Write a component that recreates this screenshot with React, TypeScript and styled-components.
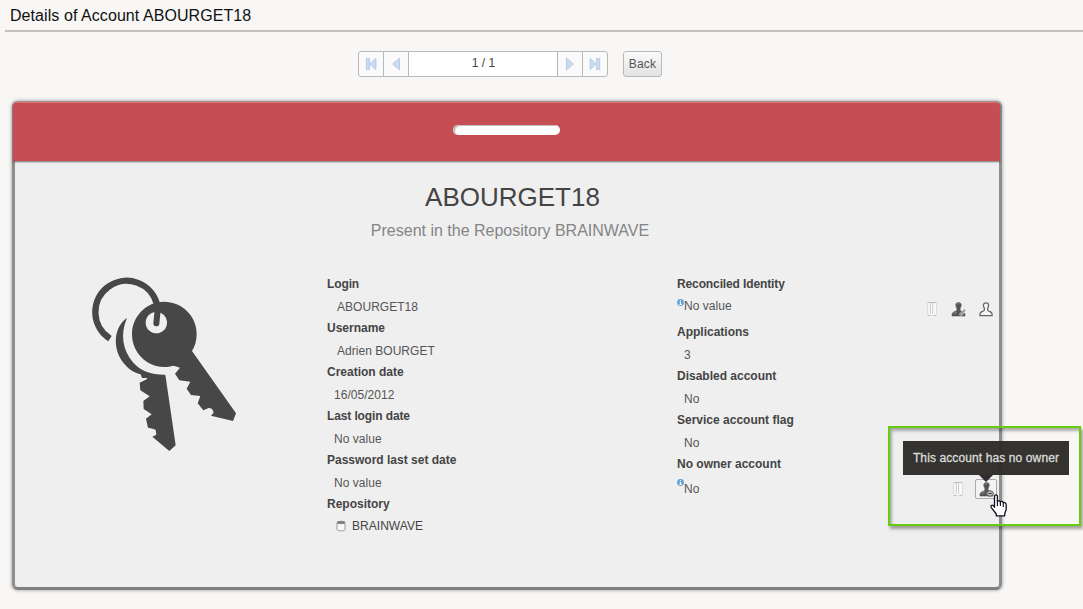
import React from 'react';
import styled, { createGlobalStyle } from 'styled-components';

const GlobalStyle = createGlobalStyle`
  * { box-sizing: border-box; }
  body { margin: 0; background: #f8f7f5; overflow: hidden; font-family: "Liberation Sans", Arial, sans-serif; }
  svg { display: block; flex-shrink: 0; }
`;

const Page = styled.main`
  position: relative;
  width: 1083px;
  height: 609px;
  overflow: hidden;
`;

const TitleBar = styled.header`
  height: 32px;
  margin-left: 5px;
  padding: 7px 0 0 5px;
  border-bottom: 2px solid #c2c1c0;
  font-size: 16px;
  line-height: 18px;
  letter-spacing: 0.07px;
  color: #111;
  white-space: nowrap;
`;

const Toolbar = styled.nav`
  display: flex;
  gap: 15px;
  padding: 19px 0 0 358px;
`;

const Pager = styled.div`
  display: flex;
  width: 250px;
  height: 26px;
  border: 1px solid #b9b9b9;
  border-radius: 3px;
  background: #fafafa;
`;

const PagerButton = styled.button<{ $side: 'left' | 'right' }>`
  display: flex;
  align-items: center;
  justify-content: center;
  width: 25px;
  padding: 0;
  border: 0 solid #b9b9b9;
  border-right-width: ${(p) => (p.$side === 'left' ? '1px' : '0')};
  border-left-width: ${(p) => (p.$side === 'right' ? '1px' : '0')};
  background: transparent;
`;

const PageNumber = styled.div`
  flex: 1;
  padding-left: 1px;
  background: #fff;
  color: #444;
  font-size: 12px;
  line-height: 22px;
  text-align: center;
`;

const BackButton = styled.button`
  width: 39px;
  height: 26px;
  padding: 0;
  border: 1px solid #b9b9b9;
  border-radius: 3px;
  background: linear-gradient(#fafafa, #e2e2e2);
  color: #555;
  font: 12px "Liberation Sans", Arial, sans-serif;
  letter-spacing: 0.2px;
`;

const Card = styled.section`
  width: 990px;
  height: 489px;
  margin: 24px 0 0 12px;
  border: 3px solid #8e8e8e;
  border-top: 1px solid #999;
  border-bottom-color: #807e7e;
  border-radius: 6px;
  background: #efefef;
  box-shadow: 0 0 3px 1px rgba(110, 110, 110, 0.45);
`;

const Banner = styled.div`
  display: flex;
  justify-content: center;
  height: 59px;
  margin: 0 -1px 0 -2px;
  padding: 22px 0 0 0;
  border-top: 1px solid #df7173;
  border-radius: 4px 4px 0 0;
  background: #c64e52;
  box-shadow: 0 1px 2px rgba(60, 60, 60, 0.7);
`;

const Slot = styled.div`
  width: 107px;
  height: 10px;
  margin-right: 1px;
  border-radius: 5px;
  background: #fff;
  box-shadow: inset 2px 1px 1px #bcbcbc;
`;

const AccountName = styled.h1`
  margin: 21px 0 0 11px;
  color: #444;
  font-size: 26px;
  font-weight: 400;
  line-height: 30px;
  text-align: center;
`;

const Subtitle = styled.p`
  margin: 9px 0 0 6px;
  color: #858585;
  font-size: 16px;
  line-height: 20px;
  text-align: center;
`;

const Details = styled.div`
  display: flex;
  padding: 29px 0 0 65px;
`;

const Illustration = styled.div`
  width: 247px;
`;

const Column = styled.dl`
  width: 350px;
  margin: 0;
  padding-top: 6px;
  color: #555;
  font-size: 12px;
  line-height: 16px;
`;

const LastColumn = styled(Column)`
  width: 322px;
`;

const Field = styled.div<{ $height?: number }>`
  height: ${(p) => p.$height ?? 44}px;
`;

const Label = styled.dt<{ $tight?: boolean }>`
  color: #444;
  font-weight: 700;
  letter-spacing: ${(p) => (p.$tight ? '-0.12px' : 'normal')};
`;

const Value = styled.dd<{ $indent?: number; $top?: number }>`
  display: flex;
  height: 16px;
  margin: ${(p) => p.$top ?? 7}px 0 0 ${(p) => p.$indent ?? 7}px;
  letter-spacing: 0.03px;
`;

const InfoMark = styled.span<{ $raise: number }>`
  margin-top: ${(p) => -p.$raise}px;
`;

const RepositoryMark = styled.span`
  margin-top: 2px;
`;

const RepositoryName = styled.span`
  margin-left: 6px;
  color: #444;
`;

const Tools = styled.span<{ $top: number; $right: number; $gap: number }>`
  display: flex;
  align-items: center;
  gap: ${(p) => p.$gap}px;
  height: 20px;
  margin: ${(p) => p.$top}px ${(p) => p.$right}px 0 auto;
`;

const ActiveTool = styled.span`
  display: flex;
  align-items: center;
  justify-content: center;
  width: 22px;
  height: 20px;
  border: 1px solid #aaa;
  border-radius: 2px;
  background: #f3f3f3;
`;

const Highlight = styled.div`
  position: absolute;
  left: 888px;
  top: 426px;
  width: 193px;
  height: 100px;
  border: 2px solid #66cc0b;
  box-shadow: 2px 3px 3px rgba(0, 0, 0, 0.35), inset 2px 3px 3px rgba(0, 0, 0, 0.3);
`;

const Tooltip = styled.div`
  position: absolute;
  left: 903px;
  top: 441px;
  width: 166px;
  height: 34px;
  background: rgba(45, 43, 40, 0.96);
  color: #dcdcd8;
  font-size: 12px;
  line-height: 34px;
  letter-spacing: 0.11px;
  text-align: center;
  white-space: nowrap;
  -webkit-text-stroke: 0.3px #dcdcd8;

  &::after {
    content: '';
    position: absolute;
    left: 76px;
    top: 34px;
    border: 7px solid transparent;
    border-top-color: #352a31;
    border-bottom: 0;
  }
`;

const Pointer = styled.div`
  position: absolute;
  left: 990px;
  top: 494px;
`;

function ArrowIcon({ bar = false, flip = false }: { bar?: boolean; flip?: boolean }) {
  return (
    <svg width="12" height="14" viewBox="0 0 12 14">
      <g transform={flip ? 'translate(12 0) scale(-1 1)' : undefined} fill="#cbdcf3" stroke="#b0c6e8" strokeWidth=".9">
        {bar ? (
          <>
            <path d="M1.3 1.5h3v11h-3z" />
            <path d="M10.9 1.4v11.2L4.6 7z" />
          </>
        ) : (
          <path d="M9.5 1.2v11.6L2.6 7z" />
        )}
      </g>
    </svg>
  );
}

function KeysIcon() {
  return (
    <svg width="170" height="190" viewBox="0 0 510 570">
      <path d="M90 206A94 94 0 1 1 231 103" fill="none" stroke="#474747" strokeWidth="19" />
      <g fill="#474747">
        <path d="M141 144C101 171 98 232 126 273C143 297 164 309 182 313L186 324L202 324L200 328L179 338L181 361L209 379L190 393L191 417L215 433L198 446L204 473L221 477L227 480L229 494L217 500L268 543L287 526L256 314C217 315 181 304 158 276C128 240 120 192 141 144Z" />
        <path fillRule="evenodd" d="M252 95C306 95 350 138 350 191C350 211 345 229 336 243L468 430L459 453L393 437L401 428L397 418L388 413L370 421L353 400L361 378L333 375L320 356L331 335L298 331L285 311L300 293L281 287C270 289 263 291 252 291C199 291 156 247 156 193C156 139 199 95 252 95ZM229 126A32 32 0 1 0 229 190A32 32 0 1 0 229 126Z" />
      </g>
      <path d="M234 110L229 160" stroke="#474747" strokeWidth="18" strokeLinecap="round" />
    </svg>
  );
}

function InfoIcon() {
  return (
    <svg width="7" height="8" viewBox="0 0 7 8">
      <circle cx="3.5" cy="3.5" r="3.4" fill="#65a2d4" />
      <path d="M3.5 1.2v1M2.5 3.1h1.1v2.3M2.3 5.5h2.5" fill="none" stroke="#fff" />
    </svg>
  );
}

function DatabaseIcon() {
  return (
    <svg width="10" height="12" viewBox="0 0 10 12">
      <path d="M1 2.5v7c0 1.8 8 1.8 8 0v-7" fill="#f7f7f7" stroke="#999" />
      <ellipse cx="5" cy="2.5" rx="4" ry="1.2" fill="#777" stroke="#888" />
    </svg>
  );
}

function FolderIcon() {
  return (
    <svg width="12" height="16" viewBox="0 0 12 16">
      <path d="M1.5 1.5h9v13h-9z" fill="#f4f4f4" stroke="#dcdcdc" />
      <path d="M4.5 2v11M6.5 2v11" stroke="#cfcfcf" />
      <path d="M5.5 3v11M9 3v9" stroke="#fff" />
      <path d="M2 1.5h8M2 14.5h2M8 14.5h2" stroke="#bdbdbd" />
    </svg>
  );
}

const PERSON = 'M7.5 1C5.5 1 4.5 2.3 4.8 4.1C5 5.5 5.8 6.4 5.9 7.3C6 8.7 5.6 9.5 4 10C2 10.6 1 11.5 1 13.2V14.5H14V13.2C14 11.5 13 10.6 11 10C9.4 9.5 9 8.7 9.1 7.3C9.2 6.4 10 5.5 10.2 4.1C10.5 2.3 9.5 1 7.5 1Z';

function PersonIcon({ kind }: { kind: 'edit' | 'outline' | 'remove' }) {
  const outline = kind === 'outline';
  return (
    <svg width={outline ? 14 : 15} height="17" viewBox="0 0 15 16">
      <path d={PERSON} fill={outline ? '#f7f7f7' : '#555'} stroke={outline ? '#666' : '#555'} strokeWidth={outline ? 1.4 : 0.6} />
      {!outline && <path d="M6.2 3c0-1 1.3-1.3 2-.8M3 12.5c0-1 1.5-1.3 2.5-1.7" stroke="#999" fill="none" />}
      {kind === 'edit' && (
        <>
          <path d="M9 13.5l5-5" stroke="#ddd" strokeWidth="2.6" />
          <path d="M8.5 13.8l5.5-5.6" stroke="#8c8c8c" strokeWidth="1.5" />
          <path d="M11 14.5l3-3" stroke="#777" />
        </>
      )}
      {kind === 'remove' && (
        <>
          <ellipse cx="11" cy="12" rx="3.4" ry="2.7" fill="#bbb" stroke="#555" />
          <path d="M9.2 12h3.6" stroke="#444" />
        </>
      )}
    </svg>
  );
}

function HandIcon() {
  return (
    <svg width="18" height="23" viewBox="0 0 18 23">
      <path
        d="M4.5 13.2V2.3C4.5.4 7.4.4 7.4 2.3V7.5C7.8 6.4 10.2 6.5 10.4 8.1C11 7 13.2 7.3 13.3 8.9C14.4 8 16.2 8.8 16.2 10.4V15C16.2 17 14.7 18.2 14.7 20V21.8H6.3V20L1.5 13.8C.2 11.9 1.8 10.1 3.3 11.6Z"
        fill="#fff"
        stroke="#101023"
        strokeWidth="1.3"
        strokeLinejoin="round"
      />
      <path d="M7.4 7v5M10.4 8v4M13.3 9v4" stroke="#101023" strokeWidth="1.1" />
    </svg>
  );
}

export default function App() {
  return (
    <>
      <GlobalStyle />
      <Page>
        <TitleBar>Details of Account ABOURGET18</TitleBar>
        <Toolbar>
          <Pager>
            <PagerButton $side="left" aria-label="First"><ArrowIcon bar /></PagerButton>
            <PagerButton $side="left" aria-label="Previous"><ArrowIcon /></PagerButton>
            <PageNumber>1 / 1</PageNumber>
            <PagerButton $side="right" aria-label="Next"><ArrowIcon flip /></PagerButton>
            <PagerButton $side="right" aria-label="Last"><ArrowIcon bar flip /></PagerButton>
          </Pager>
          <BackButton>Back</BackButton>
        </Toolbar>
        <Card>
          <Banner><Slot /></Banner>
          <AccountName>ABOURGET18</AccountName>
          <Subtitle>Present in the Repository BRAINWAVE</Subtitle>
          <Details>
            <Illustration><KeysIcon /></Illustration>
            <Column>
              <Field><Label $tight>Login</Label><Value $indent={10}>ABOURGET18</Value></Field>
              <Field><Label>Username</Label><Value $indent={10}>Adrien BOURGET</Value></Field>
              <Field><Label>Creation date</Label><Value>16/05/2012</Value></Field>
              <Field><Label $tight>Last login date</Label><Value>No value</Value></Field>
              <Field><Label>Password last set date</Label><Value>No value</Value></Field>
              <Field>
                <Label>Repository</Label>
                <Value $indent={9} $top={6}>
                  <RepositoryMark><DatabaseIcon /></RepositoryMark>
                  <RepositoryName>BRAINWAVE</RepositoryName>
                </Value>
              </Field>
            </Column>
            <LastColumn>
              <Field $height={48}>
                <Label $tight>Reconciled Identity</Label>
                <Value $indent={0} $top={6}>
                  <InfoMark $raise={-1}><InfoIcon /></InfoMark>No value
                  <Tools $top={1} $right={6} $gap={13}><FolderIcon /><PersonIcon kind="edit" /><PersonIcon kind="outline" /></Tools>
                </Value>
              </Field>
              <Field><Label>Applications</Label><Value>3</Value></Field>
              <Field><Label>Disabled account</Label><Value>No</Value></Field>
              <Field><Label>Service account flag</Label><Value>No</Value></Field>
              <Field>
                <Label>No owner account</Label>
                <Value $indent={0} $top={9}>
                  <InfoMark $raise={2}><InfoIcon /></InfoMark>No
                  <Tools $top={-2} $right={2} $gap={11}><FolderIcon /><ActiveTool><PersonIcon kind="remove" /></ActiveTool></Tools>
                </Value>
              </Field>
            </LastColumn>
          </Details>
        </Card>
        <Highlight />
        <Tooltip>This account has no owner</Tooltip>
        <Pointer><HandIcon /></Pointer>
      </Page>
    </>
  );
}
